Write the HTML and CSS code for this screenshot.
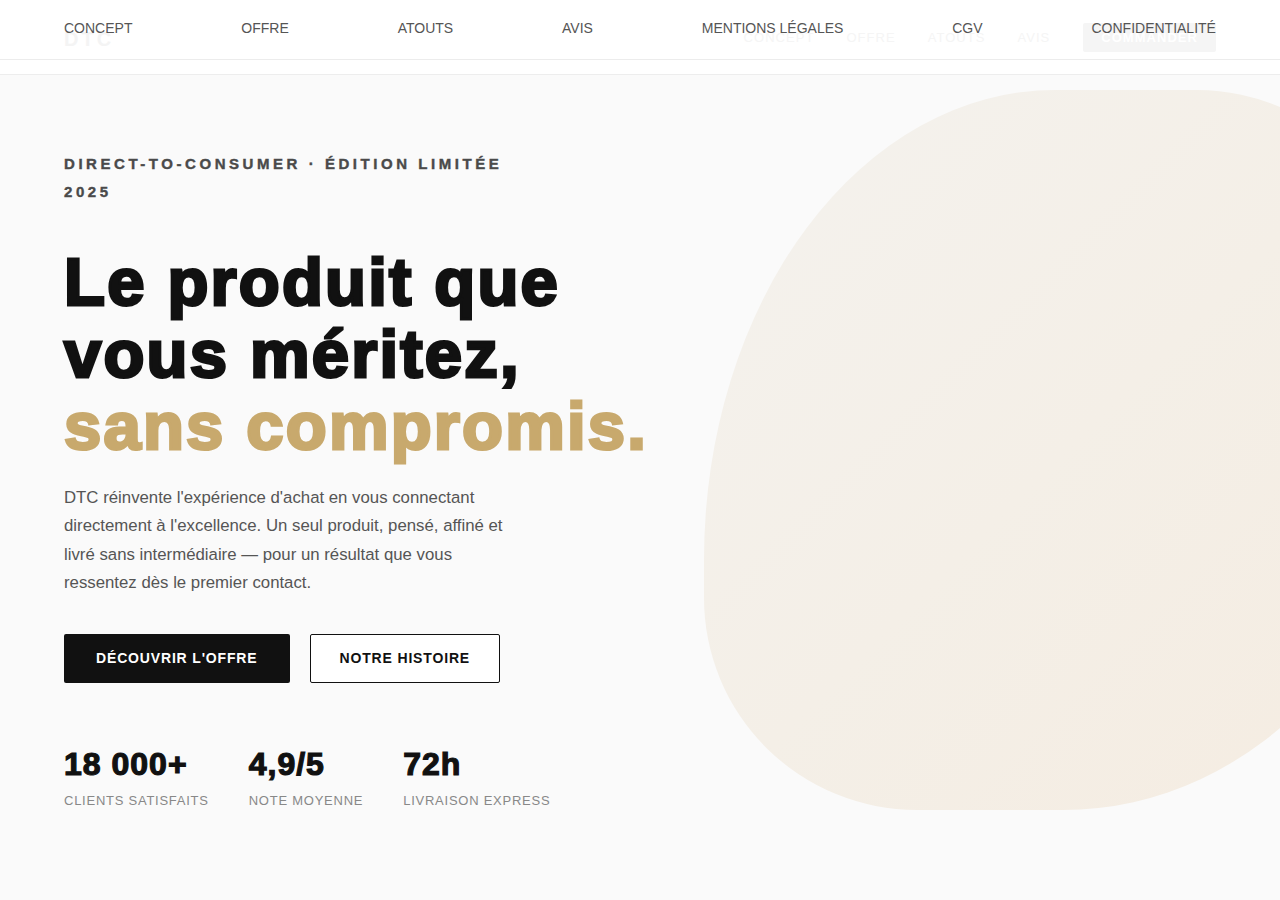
FILE: index.html
```html
<!DOCTYPE html>
<html lang="fr">
<head>
<meta charset="utf-8">
<title>DTC — Le produit que vous méritez</title>
<link rel="stylesheet" href="styles.css">
</head>
<body>
  <header class="site-header">
    <div class="logo">DTC</div>
    <div class="header-right">
      <nav class="main-nav">
        <a href="#">Concept</a>
        <a href="#">Offre</a>
        <a href="#">Atouts</a>
        <a href="#">Avis</a>
      </nav>
      <a class="header-cta" href="#">Commander</a>
    </div>
  </header>

  <nav class="overlay-nav">
    <a href="#">Concept</a>
    <a href="#">Offre</a>
    <a href="#">Atouts</a>
    <a href="#">Avis</a>
    <a href="#">Mentions légales</a>
    <a href="#">CGV</a>
    <a href="#">Confidentialité</a>
  </nav>

  <main class="hero">
    <div class="hero-blob"></div>
    <div class="hero-content">
      <p class="eyebrow">Direct-to-consumer · Édition limitée 2025</p>
      <h1 class="headline">Le produit que<br>vous méritez,<br><span class="accent">sans compromis.</span></h1>
      <p class="lead">DTC réinvente l'expérience d'achat en vous connectant directement à l'excellence. Un seul produit, pensé, affiné et livré sans intermédiaire — pour un résultat que vous ressentez dès le premier contact.</p>
      <div class="actions">
        <a class="btn btn-primary" href="#">Découvrir l'offre</a>
        <a class="btn btn-outline" href="#">Notre histoire</a>
      </div>
      <div class="stats">
        <div class="stat">
          <div class="stat-value">18 000+</div>
          <div class="stat-label">Clients satisfaits</div>
        </div>
        <div class="stat">
          <div class="stat-value">4,9/5</div>
          <div class="stat-label">Note moyenne</div>
        </div>
        <div class="stat">
          <div class="stat-value">72h</div>
          <div class="stat-label">Livraison express</div>
        </div>
      </div>
    </div>
  </main>
</body>
</html>
```

FILE: styles.css
```css
* { box-sizing: border-box; }

html, body {
  margin: 0;
  padding: 0;
}

body {
  font-family: "Liberation Sans", Arial, sans-serif;
  background: #fafafa;
  color: #111;
  position: relative;
}

a { text-decoration: none; color: inherit; }

/* faint header underneath */
.site-header {
  height: 75px;
  display: flex;
  align-items: center;
  justify-content: space-between;
  padding: 0 64px;
  background: #ffffff;
  border-bottom: 1px solid #ededed;
}

.logo {
  font-size: 20px;
  font-weight: 700;
  letter-spacing: 0.15em;
  color: #f4f4f4;
  padding-top: 4px;
}

.header-right {
  display: flex;
  align-items: center;
  gap: 33px;
  padding-top: 1px;
}

.main-nav {
  display: flex;
  gap: 32px;
}

.main-nav a {
  font-size: 13px;
  letter-spacing: 0.08em;
  text-transform: uppercase;
  color: #f5f5f5;
}

.header-cta {
  display: block;
  font-size: 13px;
  font-weight: 700;
  letter-spacing: 0.08em;
  line-height: 17px;
  text-transform: uppercase;
  color: #ffffff;
  background: #f5f5f5;
  padding: 6px 18px;
  border-radius: 2px;
}

/* overlay link bar on top */
.overlay-nav {
  position: absolute;
  top: 0;
  left: 0;
  right: 0;
  height: 60px;
  display: flex;
  justify-content: space-between;
  align-items: flex-start;
  padding: 20px 64px 0;
  border-bottom: 1px solid #ececec;
}

.overlay-nav a {
  font-size: 14px;
  line-height: 16px;
  text-transform: uppercase;
  color: #555;
}

/* hero */
.hero {
  position: relative;
  overflow: hidden;
  background: #fafafa;
  min-height: 825px;
  padding: 75px 64px 80px;
}

.hero-blob {
  position: absolute;
  left: 704px;
  top: 15px;
  width: 720px;
  height: 720px;
  background: linear-gradient(135deg, #f4f2ee 0%, #f4efe7 50%, #f5ece1 100%);
  border-radius: 351px 227px 361px 213px / 470px 245px 408px 212px;
}

.hero-content {
  position: relative;
}

.eyebrow {
  margin: 0;
  max-width: 470px;
  font-size: 15px;
  font-weight: 700;
  line-height: 28px;
  letter-spacing: 3.55px;
  text-transform: uppercase;
  color: #4a4a4a;
  -webkit-text-stroke: 0.4px #4a4a4a;
}

.headline {
  margin: 40px 0 22px;
  font-size: 67px;
  line-height: 72px;
  font-weight: 700;
  letter-spacing: 2.2px;
  color: #111;
  -webkit-text-stroke: 3px #111;
}

.accent {
  color: #c8a96d;
  -webkit-text-stroke: 3px #c8a96d;
}

.lead {
  margin: 0;
  max-width: 450px;
  font-size: 16.8px;
  line-height: 28.4px;
  color: #555;
}

.actions {
  display: flex;
  gap: 20px;
  margin-top: 36px;
}

.btn {
  display: block;
  font-size: 14px;
  font-weight: 700;
  line-height: 17px;
  letter-spacing: 0.06em;
  text-transform: uppercase;
  border-radius: 2px;
}

.btn-primary {
  background: #111;
  color: #fff;
  padding: 16px 32px;
}

.btn-outline {
  background: #fff;
  color: #111;
  border: 1px solid #111;
  padding: 15px 29px;
}

.stats {
  display: flex;
  gap: 40px;
  margin-top: 63px;
}

.stat-value {
  font-size: 32px;
  line-height: 36px;
  font-weight: 700;
  letter-spacing: 1px;
  color: #111;
  -webkit-text-stroke: 1.2px #111;
}

.stat-label {
  margin-top: 9px;
  font-size: 13px;
  line-height: 19px;
  letter-spacing: 0.75px;
  text-transform: uppercase;
  color: #888;
}
```
